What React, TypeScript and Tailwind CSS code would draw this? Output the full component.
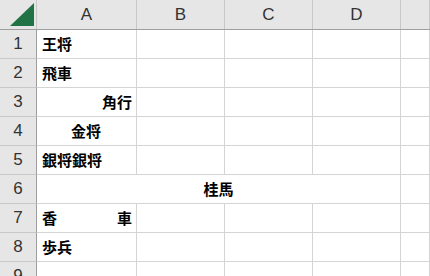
import React from "react";

const cols = ["A", "B", "C", "D", ""];
const colW = ["w-[100px]", "w-[88px]", "w-[88px]", "w-[88px]", "flex-1"];

type Cell = { text?: React.ReactNode; align?: string };

const rows: (Cell | "merged")[] = [
  { text: "王将", align: "justify-start" },
  { text: "飛車", align: "justify-start" },
  { text: "角行", align: "justify-end" },
  { text: "金将", align: "justify-center pr-[6px]" },
  { text: "銀将銀将", align: "justify-start" },
  "merged",
  {
    text: (
      <>
        <span>香</span>
        <span>車</span>
      </>
    ),
    align: "justify-between",
  },
  { text: "歩兵", align: "justify-start" },
  {},
];

const cjk = "font-['Noto_Sans_CJK_JP',sans-serif] font-bold text-[15px] text-black";

function RowHead({ n }: { n: number }) {
  return (
    <div className="w-[37px] shrink-0 flex items-center justify-center bg-[#e6e6e6] border-r border-r-[#9e9e9e] border-b border-b-[#c8c8c8] text-[17px] text-[#333] font-['Liberation_Sans',sans-serif]">
      {n}
    </div>
  );
}

export default function App() {
  return (
    <div className="w-[430px] h-[276px] overflow-hidden bg-white select-none">
      {/* column header */}
      <div className="flex h-[30px] bg-[#e6e6e6] border-b border-b-[#9e9e9e]">
        <div className="w-[37px] shrink-0 relative border-r border-r-[#c8c8c8]">
          <svg className="absolute left-0 top-0" width="37" height="29" viewBox="0 0 37 29">
            <polygon points="10,26 34,26 34,3" fill="#217346" />
          </svg>
        </div>
        {cols.map((c, i) => (
          <div
            key={i}
            className={`${colW[i]} shrink-0 flex items-center justify-center border-r border-r-[#c8c8c8] text-[17px] text-[#333] font-['Liberation_Sans',sans-serif]`}
          >
            {c}
          </div>
        ))}
      </div>

      {rows.map((r, i) => (
        <div key={i} className="flex h-[29px]">
          <RowHead n={i + 1} />
          {r === "merged" ? (
            <>
              <div className={`w-[364px] shrink-0 flex items-center justify-center border-r border-b border-[#d4d4d4] ${cjk}`}>
                桂馬
              </div>
              <div className="flex-1 border-r border-b border-[#d4d4d4]" />
            </>
          ) : (
            <>
              <div className={`w-[100px] shrink-0 flex items-center pl-[5px] pr-[4px] border-r border-b border-[#d4d4d4] ${r.align ?? ""} ${cjk}`}>
                {r.text}
              </div>
              {colW.slice(1).map((w, j) => (
                <div key={j} className={`${w} shrink-0 border-r border-b border-[#d4d4d4]`} />
              ))}
            </>
          )}
        </div>
      ))}
    </div>
  );
}
